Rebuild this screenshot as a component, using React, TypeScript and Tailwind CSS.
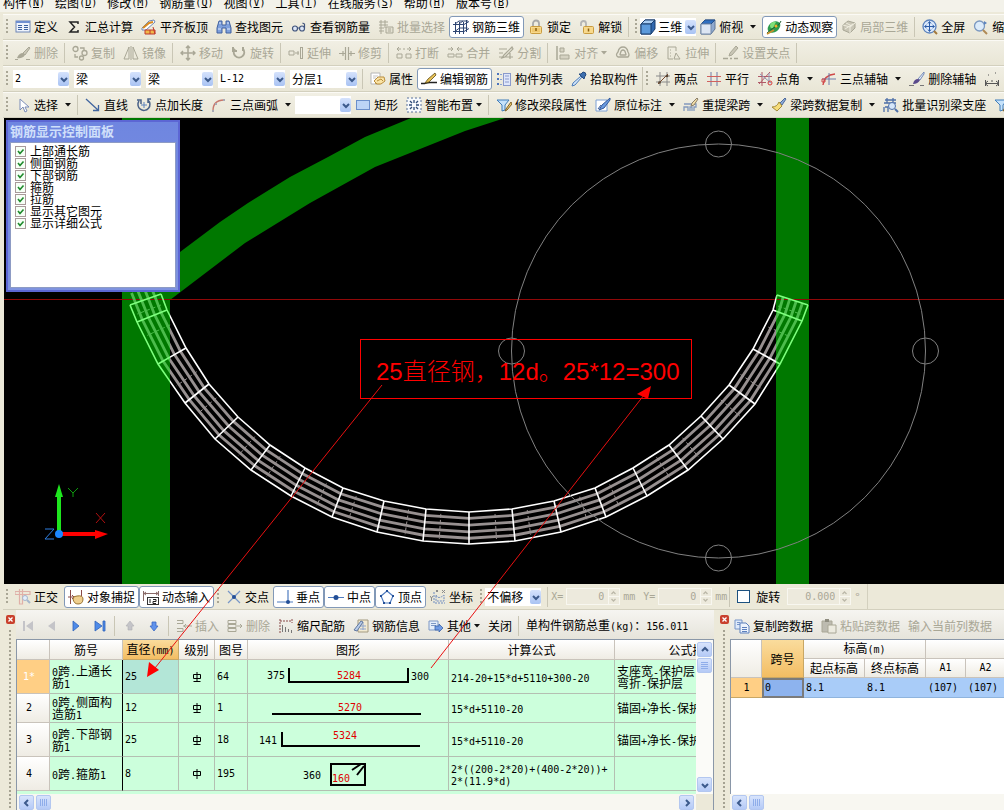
import React from "react";
import type { ReactNode } from "react";

/* ---------- text ---------- */

// Latin runs use a 6px-wide monospaced face next to 12px Chinese glyphs.
function Mix({ children }: { children: string }) {
  const parts = children.split(/([\x20-\x7e]+)/).filter(Boolean);
  return (
    <>
      {parts.map((p, i) =>
        /^[\x20-\x7e]+$/.test(p) ? (
          <span key={i} className="whitespace-pre font-['DejaVu_Sans_Mono',monospace] text-[10px]">
            {p}
          </span>
        ) : (
          <React.Fragment key={i}>{p}</React.Fragment>
        ),
      )}
    </>
  );
}

/* ---------- icons ---------- */

const G = "#a9a796";
const B = "#3a5f9e";

const icons: Record<string, ReactNode> = {
  define: (
    <>
      <rect x="1" y="2" width="14" height="11" fill="#eef3fc" stroke="#6f86b5" />
      <rect x="1" y="2" width="14" height="2" fill="#6f8fd0" />
      <path d="M3 6.500h4M3 8.500h4M3 10.500h4M9 6.500h4M9 8.500h4M9 10.500h4" stroke={B} />
    </>
  ),
  sigma: <path d="M12 5V3H4l4.500 5L4 13h8v-2" fill="none" stroke="#222" strokeWidth="1.500" />,
  align: (
    <>
      <path d="M1 9l7-7 5-1 1 2-9 8H1z" fill="#fff" stroke="#6d87b8" />
      <path d="M2 9l6-5 4-1" stroke="#d98a1e" strokeWidth="2" fill="none" />
      <path d="M4 11h10v4H4z" fill="#f0b848" stroke="#c0392b" />
      <path d="M9 11v4M12 8l2 7" stroke="#c0392b" />
    </>
  ),
  find: (
    <>
      <path d="M3 2h3v4h4V2h3l2 7v5h-5V9H6v5H1V9z" fill="#7ea0dc" stroke="#41619f" />
      <path d="M2 10h3M11 10h3M3 4h2M11 4h2" stroke="#dfe9fb" />
    </>
  ),
  view: (
    <>
      <circle cx="4" cy="9.500" r="2.500" fill="#dce6f6" stroke="#41547c" strokeWidth="1.200" />
      <circle cx="11" cy="9.500" r="2.500" fill="#dce6f6" stroke="#41547c" strokeWidth="1.200" />
      <path d="M6.500 9h2M13.500 9V5l-2-1" fill="none" stroke="#41547c" strokeWidth="1.200" />
    </>
  ),
  batch: (
    <>
      <path d="M1 3h9M1 6h9M1 9h5M1 12h5M3 1v14M7 1v8" stroke={G} fill="none" />
      <path d="M8 8h7v6H8zM10 10h3M10 12h3" stroke={G} fill="#e4e1d2" />
    </>
  ),
  rebar3d: (
    <path d="M0 5.500h11l5-3M0 12.500h11l5-3M2.500 3v12M6.500 3v12M10.500 3v12M13.500 1v12M2 5l4-3h9M6 5l4-3M2.500 12l4-3h8" stroke="#2f4673" fill="none" />
  ),
  lock: (
    <>
      <path d="M5 8V4.500a3 3 0 0 1 6 0V8" fill="none" stroke="#a8a8a8" strokeWidth="1.800" />
      <rect x="2.500" y="7.500" width="11" height="7" rx="1" fill="#f8d98c" stroke="#c99b3e" />
      <path d="M4 10h8M4 12h8" stroke="#e6b655" />
      <path d="M8 9v3" stroke="#8a5f10" strokeWidth="1.500" />
    </>
  ),
  unlock: (
    <>
      <path d="M2 7V4.500a2.500 2.500 0 0 1 5 0V8" fill="none" stroke="#b4b4b4" strokeWidth="1.800" />
      <rect x="4.500" y="7.500" width="10" height="7" rx="1" fill="#f8d98c" stroke="#c99b3e" />
      <path d="M9.500 9.500v3" stroke="#8a5f10" strokeWidth="1.500" />
    </>
  ),
  cube: (
    <>
      <path d="M1 5l4-4h10v9l-4 5H1z" fill="#2f68b0" stroke="#183c6c" />
      <path d="M1 5l4-4h10l-4 4z" fill="#a9cdf3" stroke="#183c6c" />
      <path d="M1 5h10v10H1z" fill="#5d9bdc" stroke="#183c6c" />
    </>
  ),
  cubeTop: (
    <>
      <path d="M1 5l4-4h10v9l-4 5H1z" fill="#8fa9cf" stroke="#5f7797" />
      <path d="M1 5l4-4h10l-4 4z" fill="#2f6fc0" stroke="#27518a" />
      <path d="M1 5h10v10H1z" fill="#dde6f3" stroke="#7289a8" />
    </>
  ),
  orbit: (
    <>
      <ellipse cx="8" cy="8" rx="7" ry="5" fill="#2e9b4d" transform="rotate(-38 8 8)" />
      <path d="M4 6q2-4 6-3l-3 6q-3 1-3-3z" fill="#7fe07a" />
      <path d="M1 14q3-3 8-6 5-2 6-6" fill="none" stroke="#1d5d2f" />
      <path d="M1 15l7-4" stroke="#c98d2a" strokeWidth="1.500" />
      <circle cx="10" cy="7" r="1.500" fill="#f0b028" />
    </>
  ),
  local3d: (
    <>
      <path d="M2 6l5-4 7 2v5l-5 5-7-3z" fill="#c9c6b6" stroke={G} />
      <path d="M2 6l7 2 5-4M9 8v6M5 4l6 3M4 10l8-5" stroke="#efeddf" fill="none" />
    </>
  ),
  full: (
    <>
      <circle cx="7.500" cy="7.500" r="6.500" fill="#dbe9fb" stroke="#5c83bd" strokeWidth="1.300" />
      <path d="M7.500 3v9M3 7.500h9M6 4.500l1.500-2L9 4.500M6 10.500l1.500 2 1.500-2M4.500 6l-2 1.500 2 1.500M10.500 6l2 1.500-2 1.500" stroke="#2b5ca8" fill="none" />
      <path d="M12 12l3 3" stroke="#a4793c" strokeWidth="2" />
    </>
  ),
  zoom: (
    <>
      <circle cx="6.500" cy="7" r="5" fill="#dcebfa" stroke="#7b98c0" strokeWidth="1.300" />
      <path d="M10 11l4 4" stroke="#b08a55" strokeWidth="2" />
      <path d="M11 2l3 2-3 2" fill="#5c83bd" />
    </>
  ),
  brushG: (
    <>
      <path d="M14 2l-6 6 2 2 5-7z" fill="#c9c6b6" stroke={G} />
      <path d="M8 8q-4 0-6 5 5 1 8-3z" fill={G} />
      <path d="M0 14.500h3M11 14.500h4" stroke={G} />
    </>
  ),
  copyG: (
    <g fill="none" stroke={G} strokeWidth="1.300">
      <circle cx="3.500" cy="4" r="2.500" />
      <circle cx="12.500" cy="8" r="2.500" />
      <circle cx="9.500" cy="13" r="2" />
      <path d="M8 3h4v2M3 9v3h3" />
    </g>
  ),
  mirrorG: <path d="M6 2v12H1zM10 2v12h5zM8 1v14" fill="none" stroke={G} />,
  moveG: <path d="M8 1v14M1 8h14M6 3l2-2 2 2M6 13l2 2 2-2M3 6L1 8l2 2M13 6l2 2-2 2" fill="none" stroke={G} strokeWidth="1.500" />,
  rotateG: <path d="M4 4a5.200 5.200 0 1 0 8 0M2 2v4h4M12 2v4" fill="none" stroke={G} strokeWidth="2" />,
  extendG: <path d="M1 6h5v4H1zM7 8h4M10 6v4M14.500 2v12M12.500 2v12M12 2.500h3M12 13.500h3" fill="none" stroke={G} />,
  trimG: <path d="M0 8.500h6M10 8.500h6M6.500 2v13M9.500 2v13M4 6v5M12 6v5" fill="none" stroke={G} strokeWidth="1.200" />,
  breakG: <path d="M1 4h4M7 4h2M11 4h4M3 2l-2 2 2 2M13 2l2 2-2 2M1 9h5v4H1zM10 9h5v4h-5z" fill="none" stroke={G} />,
  mergeG: <path d="M1 4h5M10 4h5M4 2l2 2-2 2M12 2l-2 2 2 2M1 9h6v3H1zM9 9h6v3H9z" fill="none" stroke={G} />,
  splitG: <path d="M1 4h8M1 12h14M14 2L6 10l-2 3 3-1 8-8zM1 8h4M12 8v6" fill="none" stroke={G} strokeWidth="1.200" />,
  alignG: (
    <>
      <path d="M2 1v14" stroke={G} strokeWidth="1.500" />
      <path d="M5 3h4v4H5zM5 10h9v4H5z" fill="#d5d2c2" stroke={G} />
    </>
  ),
  offsetG: (
    <g fill="none" stroke={G} strokeWidth="1.300">
      <path d="M8 2q4 0 5 5 2 3 0 5H3q-3-2 0-5 1-5 5-5z" />
      <path d="M8 5q2 0 2.500 3 1 2 0 2h-5q-1 0 0-2Q6 5 8 5z" />
    </g>
  ),
  stretchG: <path d="M2 2h8v4M2 2v12h5M10 8l4 6H8zM4 5h1M4 8h1M4 11h1" fill="none" stroke={G} />,
  gripG: (
    <>
      <path d="M13 1L7 8l-1 3 3-1 6-7z" fill="#c9c6b6" stroke={G} />
      <path d="M0 13.500h5M7 13.500h2M11 13.500h4" stroke={G} strokeWidth="1.500" />
    </>
  ),
  props: (
    <>
      <path d="M1 2h9v11H1z" fill="#fff" stroke="#b5b5b5" />
      <path d="M3 5h5M3 7h3" stroke="#c4c4c4" />
      <path d="M4 10l4-4h6l1 4-4 3H7z" fill="#fae3a4" stroke="#b98d3c" />
      <path d="M7 10l4-2 2 2M5 12l2 1" stroke="#b98d3c" fill="none" />
    </>
  ),
  editRebar: (
    <>
      <path d="M0 12.500h4q3-1 5-1h7" fill="none" stroke="#222" strokeWidth="1.300" />
      <path d="M14 2L7 8l-3 4 4-1 7-7z" fill="#e8c257" stroke="#5e4a12" strokeWidth=".8" />
    </>
  ),
  list: (
    <>
      <path d="M1 2h2v2H1zM1 7h2v2H1zM1 12h2v2H1z" fill="#4c74bd" />
      <path d="M4 3.500h2M4 8.500h2M4 13.500h2" stroke="#8aa3d2" />
      <rect x="7.500" y="2.500" width="7" height="12" fill="#dfe6fa" stroke="#8b9acb" />
      <path d="M9 5h4M9 8h4M9 11h4" stroke="#8b9acb" />
    </>
  ),
  pick: (
    <>
      <path d="M10 5l1 1-7 8-3 1 1-3z" fill="#cfe4fb" stroke="#4f7db8" />
      <path d="M8 3l5 5 1-3 1-1q0-3-3-3l-2 2z" fill="#3e6fae" stroke="#254b80" />
    </>
  ),
  twoPt: (
    <>
      <path d="M5 1v14M12 1v14M1 5h14M1 11h14" stroke="#8a8a8a" fill="none" />
      <path d="M3 13L13 3" stroke="#7a4a30" />
      <circle cx="4.500" cy="11.500" r="1.300" fill="#5b4632" />
      <circle cx="12" cy="5" r="1.300" fill="#5b4632" />
    </>
  ),
  parallel: (
    <>
      <path d="M5 1v14M11 1v14" stroke="#6f7ba8" />
      <path d="M1 5.500h14M1 10.500h14" stroke="#d0605e" />
    </>
  ),
  ptAngle: (
    <>
      <path d="M5 1v14M1 5.500h14M1 11.500h8M13 1L2 13" stroke="#b05a68" fill="none" />
      <path d="M12 2v10M3 3l11 9" stroke="#8f97b8" />
      <circle cx="13" cy="12" r="2" fill="none" stroke="#d43d3d" />
    </>
  ),
  threeAxis: (
    <>
      <path d="M2 14Q3 4 14 3" fill="none" stroke="#d04848" strokeWidth="1.400" />
      <path d="M8 2v12M1 8h14" stroke="#6f7ba8" />
      <path d="M1 8h3v3H1z" fill="none" stroke="#d04848" />
    </>
  ),
  delAxis: (
    <>
      <path d="M15 1L9 8l2 1 4-6z" fill="#e6edf8" stroke="#7389b6" />
      <path d="M9 8q-4 0-5 5 5 0 7-4z" fill="#5a4a8c" />
      <path d="M0 14.500h5M11 14.500h4" stroke="#777" />
    </>
  ),
  dim: <path d="M1.500 9v6M14.500 9v6M1 12.500h14M4 10l-3 2.500 3 2.500M12 10l3 2.500-3 2.500M4 4h1M11 2h1M8 9v2" fill="none" stroke="#555" />,
  cursor: <path d="M5 2v11l3-3 2 5 2-1-2-4h4z" fill="#fff" stroke="#7a8cb8" />,
  line: <path d="M1 2l12 11M8 13.500h5.500V8" fill="none" stroke="#41659f" strokeWidth="1.300" />,
  ptLen: (
    <>
      <path d="M3 4a6 6 0 1 0 9-1M1 3h4v4M12 6V2h3" fill="none" stroke="#4a6288" strokeWidth="1.500" />
      <path d="M8 5v6M5 8h6" stroke="#5c83bd" />
    </>
  ),
  arc: (
    <>
      <path d="M2 14Q2 3 13 3" fill="none" stroke="#c8776c" strokeWidth="1.400" />
      <path d="M12 2h2v2h-2zM1 13h2v2H1zM4 6h2v2H4z" fill="#a9a9b4" />
    </>
  ),
  rect: <rect x="1.500" y="3.500" width="13" height="9" fill="#bcd4f6" stroke="#6b8fca" />,
  smart: (
    <>
      <path d="M1 1h14v14H1z" fill="#f7fafd" stroke="#58719b" strokeDasharray="2 2" />
      <path d="M8 3v3M8 10v3M3 8h3M10 8h3M4 4l2 2M12 4l-2 2M4 12l2-2M12 12l-2-2" stroke="#2f4b78" strokeWidth="1.300" />
    </>
  ),
  beamProp: (
    <>
      <path d="M1 3h12l-4 5v5l-3 1V8z" fill="#c6e2fa" stroke="#3f7dbb" />
      <path d="M15 5l-5 7-1 2 2-1 5-6z" fill="#f0c968" stroke="#7d602a" />
    </>
  ),
  label: (
    <>
      <path d="M1 3h11v11H1z" fill="#fff" stroke="#7da0d4" />
      <path d="M15 1L7 8l-3 5 5-2 6-8z" fill="#6a9be0" stroke="#33589a" />
      <path d="M3 12l3-4" stroke="#33589a" />
    </>
  ),
  respan: (
    <>
      <path d="M1 7h12v3h-2v4M5 14v-4H1v4M9 14v-4H7v4" fill="none" stroke="#8299bd" strokeWidth="1.300" />
      <path d="M14 1L9 6l-1 3 3-1 4-6z" fill="#f3dfa8" stroke="#8b7f6a" />
    </>
  ),
  spanCopy: (
    <>
      <path d="M14 1l-5 5 2 2 4-6z" fill="#8ba9d8" stroke="#4e6b9d" />
      <path d="M8 5l3 4-5 5-5-4q5 0 7-5z" fill="#f6dd7a" stroke="#a58b3a" />
    </>
  ),
  recog: (
    <>
      <path d="M2 3h11M1 6h12M4 1v5M10 1v5M2 10h3v5M1 10v5" fill="none" stroke="#4e6fa8" strokeWidth="1.300" />
      <circle cx="9" cy="9" r="3.500" fill="#d5e6fa" stroke="#4e6fa8" />
      <path d="M12 12l3 3" stroke="#4e6fa8" strokeWidth="2" />
    </>
  ),
  ortho: (
    <>
      <path d="M0 2.500h15v3H0zM4.500 0v15h3V0" stroke="#e0b0a8" fill="none" strokeWidth="1.200" />
      <circle cx="10" cy="9" r="2.500" fill="#e4eefb" stroke="#a5b6cc" />
      <path d="M12 11l3 3" stroke="#a5b6cc" strokeWidth="2" />
    </>
  ),
  snap: (
    <>
      <path d="M2.500 1v14M13.500 1v9M0 8h6M4 6l2 2-2 2" stroke="#8a4a48" fill="none" />
      <path d="M5 10q0-3 4-3 6-1 6 3 0 5-5 5-4 0-5-5z" fill="#efcf8f" stroke="#9c7432" />
    </>
  ),
  dynIn: (
    <>
      <path d="M.5 2v10M15.500 2v5M0 4.500h16M3 3L1 4.500 3 6M13 3l2 1.500L13 6" stroke="#8a6a68" fill="none" />
      <rect x="4.500" y="8.500" width="11" height="7" fill="#fff" stroke="#333" />
      <path d="M7 10v4M10 10.500h3v2h-3v2h3" stroke="#222" fill="none" />
    </>
  ),
  cross: (
    <>
      <path d="M2 2l12 12M14 2L2 14" stroke="#7796c8" strokeWidth="1.200" />
      <circle cx="8" cy="8" r="2" fill="#234f97" />
    </>
  ),
  perp: (
    <>
      <path d="M11 1v12M0 13h16" stroke="#4f7cc0" strokeWidth="1.200" />
      <circle cx="11" cy="13" r="2" fill="#234f97" />
    </>
  ),
  mid: (
    <>
      <path d="M0 8.500h16" stroke="#4f7cc0" />
      <circle cx="8" cy="8.500" r="2.500" fill="#234f97" />
    </>
  ),
  vertex: (
    <>
      <path d="M8 2l6 5-3 7H5L2 7z" fill="none" stroke="#4f7cc0" strokeWidth="1.200" />
      <path d="M7 1h2v2H7zM13 6h2v2h-2zM1 6h2v2H1zM4 13h2v2H4zM10 13h2v2h-2z" fill="#234f97" />
    </>
  ),
  coord: (
    <>
      <path d="M4 3v11h11M6 6q2 5 8 0v6H6z" stroke="#6d8bc0" fill="none" strokeDasharray="2 1" />
      <path d="M12 1l3 3M15 1l-3 3M6 1l2 2M8 1L6 3M0 7l1.500 2v3M3 7L1.500 9" stroke="#8a8a8a" fill="none" />
    </>
  ),
  first: <path d="M3 3h2v10H3zM13 3v10L6 8z" fill="#c4c4c8" />,
  prev: <path d="M11 3v10L4 8z" fill="#c4c4c8" />,
  next: <path d="M5 3v10l6-5z" fill="#4f8be8" stroke="#2e63bb" strokeWidth=".8" />,
  last: <path d="M3 3v10l7-5zM11 3h2v10h-2z" fill="#4f8be8" stroke="#2e63bb" strokeWidth=".8" />,
  up: <path d="M8 3l4 5H10v4H6V8H4z" fill="#c4c4c8" stroke="#b0b0b4" strokeWidth=".6" />,
  down: <path d="M8 13l4-5H10V4H6v4H4z" fill="#5f92ec" stroke="#3a68c4" strokeWidth=".8" />,
  insert: <path d="M1 2.500h6v3H1M1 10.500h6v3H1M7 8h9M10 6L8 8l2 2" fill="none" stroke={G} />,
  remove: <path d="M1 2.500h8v3H1zM1 6.500h8v3H1zM1 10.500h8v3H1zM10 8h5M13 6l2 2-2 2" fill="none" stroke={G} />,
  scale: (
    <>
      <path d="M2 1v14M2 3h12M14 1v4" stroke="#8a4a48" fill="none" strokeDasharray="2 1" />
      <path d="M4.500 7v7M7.500 9v5M10.500 11v3M13.500 12v3" stroke="#777" />
    </>
  ),
  info: (
    <>
      <path d="M5 2h10v12H5z" fill="#f2ead2" stroke="#a39a80" />
      <path d="M7 8h6M7 11h6M10 4v8" stroke="#8fa5cd" />
      <path d="M1 12l7-9 2 1-6 9z" fill="#b9cdea" stroke="#60779f" />
    </>
  ),
  other: (
    <>
      <path d="M1 3h9v9H1z" fill="#e4edfa" stroke="#7d97c4" />
      <path d="M3 5.500h5M3 7.500h5" stroke="#7d97c4" />
      <path d="M7 8h4V6l4 4-4 4v-2H7z" fill="#6f9ae4" stroke="#3b62a8" strokeWidth=".8" />
    </>
  ),
  copySpan: (
    <>
      <path d="M1 2h7v9H1z" fill="#dfeafa" stroke="#7695c9" />
      <path d="M3 4.500h3M3 6.500h3" stroke="#7695c9" />
      <path d="M6 5h6l3 3v7H6z" fill="#eef4fd" stroke="#5d80bd" />
      <path d="M8 9.500h5M8 11.500h5M8 13.500h5" stroke="#5d80bd" />
    </>
  ),
  pasteG: (
    <>
      <path d="M1 3h10v11H1z" fill="#bdbbb0" stroke={G} />
      <path d="M4 1h4v3H4z" fill="#8f8d80" />
      <path d="M7 7h8v8H7z" fill="#eceadf" stroke={G} />
    </>
  ),
};

function Icon({ name }: { name: string }) {
  return (
    <svg viewBox="0 0 16 16" className="size-4 shrink-0" aria-hidden="true">
      {icons[name]}
    </svg>
  );
}

/* ---------- toolbar parts ---------- */

type ItemProps = { icon?: string; text?: string; on?: boolean; off?: boolean; arrow?: boolean; tight?: boolean };

function Item({ icon, text, on, off, arrow, tight }: ItemProps) {
  return (
    <button
      type="button"
      disabled={off}
      aria-label={text ?? icon}
      className={`flex h-[22px] shrink-0 items-center gap-[3px] rounded-[3px] border px-[3px] whitespace-nowrap ${
        on ? "border-[#8299b8] bg-white" : "border-transparent"
      } ${off ? "text-[#a9a796]" : "text-black"}`}
    >
      {icon && <Icon name={icon} />}
      {text && <span>{text}</span>}
      {arrow && (
        <svg viewBox="0 0 6 4" className={tight ? "h-1 w-[6px]" : "ml-1 h-1 w-[6px]"} aria-hidden="true">
          <path d="M0 0h6L3 3.500z" fill={off ? G : "#111"} />
        </svg>
      )}
    </button>
  );
}

function Sep() {
  return <span className="mr-[3px] ml-[2px] h-5 w-px shrink-0 bg-[#c9c6b5]" />;
}

function Grip() {
  return <span className="mx-[3px] h-4 w-[2px] shrink-0 bg-[repeating-linear-gradient(to_bottom,#aaa796_0_2px,transparent_2px_4px)]" />;
}

function Bar({ children }: { children: ReactNode }) {
  return (
    <div className="flex h-[26px] items-center overflow-hidden border-t border-b border-t-[#fbfaf5] border-b-[#d3d0be] bg-linear-to-b from-[#f1efe4] to-[#e9e6d6]">
      {children}
    </div>
  );
}

function Chevron({ dir = "down" }: { dir?: "down" | "up" | "left" | "right" }) {
  const d = {
    down: "M2 4l3 3 3-3",
    up: "M2 6l3-3 3 3",
    left: "M6 2L3 5l3 3",
    right: "M4 2l3 3-3 3",
  }[dir];
  return (
    <svg viewBox="0 0 10 10" className="size-[10px]" aria-hidden="true">
      <path d={d} fill="none" stroke="#3c5a8c" strokeWidth="2" />
    </svg>
  );
}

const comboWidth = { tiny: "w-10", narrow: "w-14", normal: "w-[67px]" };

function Combo({ value, label, size = "normal" }: { value: string; label: string; size?: keyof typeof comboWidth }) {
  const mono = /^[\x20-\x7e]*$/.test(value);
  return (
    <span className={`relative flex h-[18px] shrink-0 ${comboWidth[size]}`}>
      <select
        aria-label={label}
        className={`h-full w-full appearance-none bg-white pr-3 pl-[2px] leading-4 outline-none ${
          mono ? "font-['DejaVu_Sans_Mono',monospace] text-[10px]" : ""
        }`}
        defaultValue={value}
      >
        <option>{value}</option>
      </select>
      <span className="pointer-events-none absolute top-[2px] right-0 flex h-[14px] w-[11px] items-center justify-center rounded-[2px] bg-linear-to-b from-[#d5e2fc] to-[#a9c3f3]">
        <Chevron />
      </span>
    </span>
  );
}

function Num({ value, label, wide }: { value: string; label: string; wide?: boolean }) {
  return (
    <span className={`flex h-[17px] shrink-0 items-center border border-[#f8f7f0] bg-[#edeadd] ${wide ? "w-16" : "w-[54px]"}`}>
      <input
        disabled
        aria-label={label}
        defaultValue={value}
        className="w-full min-w-0 bg-transparent pr-1 text-right font-['DejaVu_Sans_Mono',monospace] text-[10px] text-[#a9a796]"
      />
      <svg viewBox="0 0 11 15" className="h-[15px] w-[11px] shrink-0" aria-hidden="true">
        <path d="M.5 0v15M1 7.500h10" stroke="#f8f7f0" />
        <path d="M3.500 5l2-2 2 2M3.500 10l2 2 2-2" fill="none" stroke="#bbb8a8" strokeWidth="1.300" />
      </svg>
    </span>
  );
}

/* ---------- menu ---------- */

const menus: [string, string][] = [
  ["构件", "N"],
  ["绘图", "D"],
  ["修改", "M"],
  ["钢筋量", "Q"],
  ["视图", "V"],
  ["工具", "T"],
  ["在线服务", "S"],
  ["帮助", "H"],
  ["版本号", "B"],
];

function MenuBar() {
  return (
    <nav className="flex h-3 items-end gap-[10px] overflow-hidden bg-[#f3f2ea] pb-[2px] pl-[3px] leading-[14px]">
      {menus.map(([t, k]) => (
        <a key={t} href="#" className="flex shrink-0 whitespace-nowrap">
          {t}
          <span className="font-['DejaVu_Sans_Mono',monospace] text-[10px]">
            (<u>{k}</u>)
          </span>
        </a>
      ))}
    </nav>
  );
}

function Toolbars() {
  return (
    <>
      <Bar>
        <Grip />
        <Item icon="define" text="定义" />
        <Item icon="sigma" text="汇总计算" />
        <Item icon="align" text="平齐板顶" />
        <Item icon="find" text="查找图元" />
        <Item icon="view" text="查看钢筋量" />
        <Item icon="batch" text="批量选择" off />
        <Item icon="rebar3d" text="钢筋三维" on />
        <Item icon="lock" text="锁定" />
        <Item icon="unlock" text="解锁" />
        <Sep />
        <Grip />
        <span className="flex items-center bg-white">
          <Icon name="cube" />
          <Combo value="三维" label="视图模式" size="tiny" />
        </span>
        <Item icon="cubeTop" text="俯视" arrow />
        <span className="w-[2px] shrink-0" />
        <Item icon="orbit" text="动态观察" on />
        <Item icon="local3d" text="局部三维" off />
        <Sep />
        <Item icon="full" text="全屏" />
        <Item icon="zoom" text="缩放" />
      </Bar>
      <Bar>
        <Grip />
        <Item icon="brushG" text="删除" off />
        <Sep />
        <Item icon="copyG" text="复制" off />
        <Item icon="mirrorG" text="镜像" off />
        <Sep />
        <Item icon="moveG" text="移动" off />
        <Item icon="rotateG" text="旋转" off />
        <Sep />
        <Item icon="extendG" text="延伸" off />
        <Item icon="trimG" text="修剪" off />
        <Sep />
        <Item icon="breakG" text="打断" off />
        <Item icon="mergeG" text="合并" off />
        <Item icon="splitG" text="分割" off />
        <Sep />
        <Item icon="alignG" text="对齐" arrow tight off />
        <Item icon="offsetG" text="偏移" off />
        <Item icon="stretchG" text="拉伸" off />
        <Sep />
        <Item icon="gripG" text="设置夹点" off />
        <Sep />
      </Bar>
      <Bar>
        <Grip />
        <div className="flex gap-[5px] pl-[2px]">
          <Combo value="2" label="楼层" size="narrow" />
          <Combo value="梁" label="构件类型" />
          <Combo value="梁" label="构件" />
          <Combo value="L-12" label="名称" />
          <Combo value="分层1" label="分层" />
        </div>
        <span className="w-[3px] shrink-0" />
        <Sep />
        <Item icon="props" text="属性" />
        <Item icon="editRebar" text="编辑钢筋" on />
        <Item icon="list" text="构件列表" />
        <Item icon="pick" text="拾取构件" />
        <span className="h-full w-px shrink-0 bg-[#c9c6b5]" />
        <Grip />
        <Item icon="twoPt" text="两点" />
        <Item icon="parallel" text="平行" />
        <Item icon="ptAngle" text="点角" arrow />
        <Item icon="threeAxis" text="三点辅轴" arrow />
        <Item icon="delAxis" text="删除辅轴" />
        <Item icon="dim" />
      </Bar>
      <Bar>
        <Grip />
        <Item icon="cursor" text="选择" arrow />
        <Sep />
        <Item icon="line" text="直线" />
        <Item icon="ptLen" text="点加长度" />
        <Item icon="arc" text="三点画弧" arrow />
        <Combo value="" label="画弧方式" size="narrow" />
        <Item icon="rect" text="矩形" />
        <Item icon="smart" text="智能布置" arrow tight />
        <Sep />
        <Item icon="beamProp" text="修改梁段属性" />
        <Item icon="label" text="原位标注" arrow />
        <Item icon="respan" text="重提梁跨" arrow />
        <Item icon="spanCopy" text="梁跨数据复制" arrow />
        <Item icon="recog" text="批量识别梁支座" />
        <Item icon="beamProp" />
      </Bar>
    </>
  );
}

/* ---------- drawing canvas ---------- */

type Pt = [number, number];

// Inner and outer edge joints of the curved beam, one pair per station.
const stations: [Pt, Pt][] = [
  [[161, 294], [130, 305]],
  [[167, 310], [137, 322]],
  [[186, 348], [158, 364]],
  [[209, 384], [185, 403]],
  [[238, 417], [215, 439]],
  [[270, 445], [251, 470]],
  [[305, 468], [291, 496]],
  [[343, 488], [332, 517]],
  [[384, 501], [377, 532]],
  [[426, 509], [423, 541]],
  [[469, 512], [469, 544]],
  [[512, 509], [515, 541]],
  [[554, 501], [561, 532]],
  [[595, 488], [606, 517]],
  [[633, 468], [647, 496]],
  [[669, 445], [688, 470]],
  [[701, 416], [723, 439]],
  [[729, 385], [755, 404]],
  [[753, 349], [780, 364]],
  [[773, 310], [802, 321]],
  [[777, 295], [808, 305]],
];

const at = ([a, b]: [Pt, Pt], t: number): Pt => [a[0] + (b[0] - a[0]) * t, a[1] + (b[1] - a[1]) * t];
const poly = (pts: Pt[]) => pts.map((p) => p.join(",")).join(" ");

// The bars run a little past the beam's left end.
const barStations: [Pt, Pt][] = [[[157, 284], [126, 295]], ...stations];

function Beam({ edge, bar, clip }: { edge: string; bar: string; clip: string }) {
  return (
    <g clipPath={`url(#${clip})`} fill="none">
      {[0.2, 0.41, 0.62, 0.82].map((t) => (
        <polyline key={t} points={poly(barStations.map((s) => at(s, t)))} stroke={bar} strokeWidth="2.800" />
      ))}
      {stations.slice(1).map((s, i) => {
        const prev = stations[i];
        const f = i % 2 ? 0.35 : 0.6;
        const rib: [Pt, Pt] = [at([prev[0], s[0]], f), at([prev[1], s[1]], f)];
        return <polyline key={i} points={poly([at(rib, 0.12), at(rib, 0.9)])} stroke={bar} strokeWidth="1" strokeDasharray="4 2" />;
      })}
      <polyline points={poly(stations.map((s) => s[0]))} stroke={edge} strokeWidth="1.600" />
      <polyline points={poly(stations.map((s) => s[1]))} stroke={edge} strokeWidth="1.600" />
      {stations.map((s, i) => (
        <polyline key={i} points={poly(s)} stroke={edge} strokeWidth="1.600" />
      ))}
    </g>
  );
}

function Drawing() {
  return (
    <svg viewBox="4 118 1000 466" className="block h-[466px] w-full" preserveAspectRatio="xMinYMin slice" aria-label="梁钢筋三维图">
      <defs>
        <clipPath id="solid">
          <path d="M170 118h606v466H170z" />
        </clipPath>
        <clipPath id="columns">
          <path d="M122 118h48v466h-48zM776 118h33v466h-33z" />
        </clipPath>
      </defs>
      <path d="M0 118h1010v466H0z" fill="#000" />
      <path d="M170 260L180 252 220 222 248 203 290 177 328 157 365 137 411 118H505L465 131 420 149 375 167 310 203 245 243 170 300z" fill="#007800" />
      <path d="M122 118h48v466h-48zM776 118h33v466h-33z" fill="#007800" />
      <path d="M4 299.500h1000" stroke="#900808" />
      <Beam edge="#ffffff" bar="#979090" clip="solid" />
      <Beam edge="#7dff7d" bar="#4cbc4c" clip="columns" />
      <g fill="none" stroke="#808080">
        <circle cx="718.5" cy="351" r="207" />
        <circle cx="718.5" cy="144" r="13" />
        <circle cx="718.5" cy="558" r="13" />
        <circle cx="511.5" cy="351" r="13" />
        <circle cx="925.5" cy="351" r="13" />
      </g>
      <path d="M59 534V497" stroke="#1ee61e" strokeWidth="4" />
      <path d="M59 484l4 13h-8z" fill="#1ee61e" />
      <path d="M59 534h38" stroke="#f00" strokeWidth="4" />
      <path d="M108 534l-13-4v9z" fill="#f00" />
      <circle cx="59" cy="534" r="4" fill="#1c86ff" />
      <g fill="none">
        <path d="M68 488l5 5 5-5M73 493v4" stroke="#0d9a0d" />
        <path d="M96 513l9 10M105 513l-9 10" stroke="#b01010" />
        <path d="M45 529h9l-9 10h9" stroke="#2f7fe0" />
      </g>
    </svg>
  );
}

const layers = ["上部通长筋", "侧面钢筋", "下部钢筋", "箍筋", "拉筋", "显示其它图元", "显示详细公式"];

function LayerPanel() {
  return (
    <section className="absolute top-[2px] left-[2px] flex h-[172px] w-[174px] flex-col border-2 border-[#5c66d4] bg-linear-to-b from-[#6f86e0] to-[#7f93df] px-[2px] pb-[2px]">
      <h2 className="h-5 text-[13px] leading-[18px] font-bold text-[#cfdffa]">钢筋显示控制面板</h2>
      <div className="flex-1 border border-[#8d9bc4] bg-white pt-[2px] pl-1">
        {layers.map((l) => (
          <label key={l} className="flex h-3 items-center gap-1 leading-3">
            <span className="grid size-[11px]">
              <input
                type="checkbox"
                defaultChecked
                className="peer col-start-1 row-start-1 size-[11px] appearance-none border border-[#a89a9a] bg-[#f6fff6]"
              />
              <svg viewBox="0 0 11 11" className="pointer-events-none invisible col-start-1 row-start-1 size-[11px] peer-checked:visible" aria-hidden="true">
                <path d="M3 5l2 2.500L8.500 3.500" fill="none" stroke="#1f8a2c" strokeWidth="1.600" />
              </svg>
            </span>
            {l}
          </label>
        ))}
      </div>
    </section>
  );
}

function Canvas() {
  return (
    <main className="relative ml-1 overflow-hidden bg-black">
      <Drawing />
      <LayerPanel />
      <p className="absolute top-[221px] left-[356px] h-[60px] w-[332px] border border-[#ff0000] pl-[15px] pt-px font-['Liberation_Sans','Noto_Sans_CJK_SC',sans-serif] text-[24px] leading-[62px] font-light whitespace-nowrap text-[#ff0000]">
        25直径钢，12d。25*12=300
      </p>
    </main>
  );
}

function SnapBar() {
  return (
    <div className="ml-[3px] flex h-[26px] items-center overflow-hidden border-b border-[#d3d0be] bg-[#ece9d9]">
      <Grip />
      <Item icon="ortho" text="正交" />
      <span className="w-[2px] shrink-0" />
      <Item icon="snap" text="对象捕捉" on />
      <Item icon="dynIn" text="动态输入" on />
      <Grip />
      <Item icon="cross" text="交点" />
      <Item icon="perp" text="垂点" on />
      <Item icon="mid" text="中点" on />
      <Item icon="vertex" text="顶点" on />
      <Item icon="coord" text="坐标" />
      <Grip />
      <Combo value="不偏移" label="偏移方式" size="narrow" />
      <span className="w-1 shrink-0" />
      <Sep />
      <div className="flex shrink-0 items-center gap-[3px] text-[#a9a796]">
        <Mix>X=</Mix>
        <Num value="0" label="X 偏移" />
        <Mix>mm</Mix>
        <span className="w-[2px]" />
        <Mix>Y=</Mix>
        <Num value="0" label="Y 偏移" />
        <Mix>mm</Mix>
      </div>
      <Sep />
      <label className="flex shrink-0 items-center gap-[6px] pl-1">
        <input type="checkbox" className="size-[13px] appearance-none border border-[#1c5180] bg-white" />
        旋转
      </label>
      <span className="w-[7px] shrink-0" />
      <Num value="0.000" label="旋转角度" wide />
      <span className="w-4 shrink-0 pl-1 text-[#a9a796]">°</span>
      <span className="h-full w-px bg-[#d3d0be]" />
    </div>
  );
}

/* ---------- bottom panes ---------- */

const headCell = "border-r border-b border-[#c9c3bb] bg-linear-to-b from-white to-[#efece4] p-0 text-center font-normal whitespace-nowrap";
const bodyCell = "border-r border-b border-[#b4bfb2] bg-[#ccffdc] p-0 pl-[2px] text-left leading-3";

const num = "font-['DejaVu_Sans_Mono',monospace] text-[10px]";

type Row = { no: string; name: string[]; dia: string; grade: string; fig: string; shape: ReactNode; formula: string[]; desc: string[]; h: string };

const rows: Row[] = [
  {
    no: "1*",
    name: ["0跨.上通长", "筋1"],
    dia: "25",
    grade: "Φ",
    fig: "64",
    h: "h-[34px]",
    shape: (
      <>
        <path d="M41 8v14h119V8" fill="none" stroke="#000" strokeWidth="2" />
        <text x="19" y="19">375</text>
        <text x="89" y="19" fill="#e00000">5284</text>
        <text x="163" y="20">300</text>
      </>
    ),
    formula: ["214-20+15*d+5110+300-20"],
    desc: ["支座宽-保护层", "弯折-保护层"],
  },
  {
    no: "2",
    name: ["0跨.侧面构", "造筋1"],
    dia: "12",
    grade: "Φ",
    fig: "1",
    h: "h-[29px]",
    shape: (
      <>
        <path d="M24 20h149" stroke="#000" strokeWidth="2" />
        <text x="90" y="17" fill="#e00000">5270</text>
      </>
    ),
    formula: ["15*d+5110-20"],
    desc: ["锚固+净长-保护层"],
  },
  {
    no: "3",
    name: ["0跨.下部钢", "筋1"],
    dia: "25",
    grade: "Φ",
    fig: "18",
    h: "h-[34px]",
    shape: (
      <>
        <path d="M34 9v14h138" fill="none" stroke="#000" strokeWidth="2" />
        <text x="11" y="21">141</text>
        <text x="85" y="16" fill="#e00000">5324</text>
      </>
    ),
    formula: ["15*d+5110-20"],
    desc: ["锚固+净长-保护层"],
  },
  {
    no: "4",
    name: ["0跨.箍筋1"],
    dia: "8",
    grade: "Φ",
    fig: "195",
    h: "h-[34px]",
    shape: (
      <>
        <rect x="83" y="7" width="34" height="21" fill="none" stroke="#000" strokeWidth="2" />
        <path d="M104 13l9-6M109 18l7-9" stroke="#000" strokeWidth="2" />
        <text x="55" y="22">360</text>
        <text x="84" y="25" fill="#e00000">160</text>
      </>
    ),
    formula: ["2*((200-2*20)+(400-2*20))+", "2*(11.9*d)"],
    desc: [],
  },
];

function Lines({ items }: { items: string[] }) {
  return (
    <>
      {items.map((t) => (
        <div key={t} className="h-3 whitespace-nowrap">
          <Mix>{t}</Mix>
        </div>
      ))}
    </>
  );
}

function RebarTable() {
  return (
    <table className="w-[754px] table-fixed border-separate border-spacing-0">
      <colgroup>
        <col className="w-[33px]" />
        <col className="w-[73px]" />
        <col className="w-14" />
        <col className="w-9" />
        <col className="w-[33px]" />
        <col className="w-[201px]" />
        <col className="w-[166px]" />
        <col className="w-[156px]" />
      </colgroup>
      <thead>
        <tr className="h-5 leading-4">
          <th className={headCell} />
          <th className={headCell}>筋号</th>
          <th className="border-r border-b border-[#c9a764] bg-linear-to-b from-[#fadc9c] to-[#f3bd62] p-0 text-center font-normal whitespace-nowrap">
            <Mix>直径(mm)</Mix>
          </th>
          <th className={headCell}>级别</th>
          <th className={headCell}>图号</th>
          <th className={headCell}>图形</th>
          <th className={headCell}>计算公式</th>
          <th className={headCell}>公式描述</th>
        </tr>
      </thead>
      <tbody>
        {rows.map((r, i) => (
          <tr key={r.no} className={r.h}>
            <th
              className={`border-r border-b border-[#c9c3bb] p-0 pr-2 text-center font-normal ${num} ${
                i === 0 ? "bg-[#ffcf85] text-white" : "bg-linear-to-b from-white to-[#efece4]"
              }`}
            >
              {r.no}
            </th>
            <td className="border-r border-b border-r-black border-b-[#b4bfb2] bg-[#ccffdc] p-0 pl-[2px] leading-3">
              <Lines items={r.name} />
            </td>
            <td className={`border-r border-b border-[#b4bfb2] p-0 pl-[2px] ${num} ${i === 0 ? "bg-[#b3e6d7]" : "bg-[#ccffdc]"}`}>{r.dia}</td>
            <td className={`${bodyCell} pr-[2px]`}>
              <svg viewBox="0 0 10 12" className="mx-auto h-3 w-[10px]" role="img" aria-label={r.grade}>
                <path d={i === 3 ? "M5 1v10M1.500 3.500h7v4h-7z" : "M5 1v10M1.500 3.500h7v4h-7zM1.500 10.500h7"} fill="none" stroke="#000" />
              </svg>
            </td>
            <td className={`${bodyCell} ${num}`}>{r.fig}</td>
            <td className="border-r border-b border-[#b4bfb2] bg-[#ccffdc] p-0 align-top">
              <svg viewBox="0 0 200 33" className={`block h-7 w-[200px] overflow-visible ${num}`} preserveAspectRatio="xMinYMin slice">
                {r.shape}
              </svg>
            </td>
            <td className={bodyCell}>
              <Lines items={r.formula} />
            </td>
            <td className={bodyCell}>
              <Lines items={r.desc} />
            </td>
          </tr>
        ))}
      </tbody>
    </table>
  );
}

const scrollBtn = "flex size-[15px] shrink-0 items-center justify-center rounded-[2px] border border-[#b3c7f0] bg-linear-to-b from-[#d8e4fc] to-[#b5caf6]";

function HScroll({ end }: { end?: boolean }) {
  return (
    <div className="flex h-[17px] items-center gap-[2px] bg-[#f8f7f1] px-[2px]">
      <button type="button" aria-label="向左滚动" className={scrollBtn}>
        <Chevron dir="left" />
      </button>
      <span className={scrollBtn}>
        <svg viewBox="0 0 9 9" className="size-[9px]" aria-hidden="true">
          <path d="M1.500 1v7M3.500 1v7M5.500 1v7M7.500 1v7" stroke="#8fadea" />
        </svg>
      </span>
      {end && (
        <button type="button" aria-label="向右滚动" className={`${scrollBtn} ml-auto`}>
          <Chevron dir="right" />
        </button>
      )}
    </div>
  );
}

function DockEdge({ label }: { label: string }) {
  return (
    <div className="flex w-4 shrink-0 flex-col items-center gap-[6px] bg-[#ece9d9] pt-[5px] pl-1">
      <button type="button" aria-label={label} className="size-[9px] shrink-0 rounded-[2px] bg-[#c9402c]">
        <svg viewBox="0 0 9 9" aria-hidden="true">
          <path d="M2.500 2.500l4 4M6.500 2.500l-4 4" stroke="#fff" strokeWidth="1.300" />
        </svg>
      </button>
      <span className="w-[2px] flex-1 bg-[repeating-linear-gradient(to_bottom,#a5a292_0_2px,transparent_2px_4px)]" />
    </div>
  );
}

function LeftPane() {
  return (
    <section className="flex min-w-0">
      <DockEdge label="关闭钢筋面板" />
      <div className="flex min-w-0 flex-1 flex-col">
        <div className="flex h-[29px] items-center overflow-hidden bg-linear-to-b from-[#f6f5f1] to-[#e6e4db] pt-[3px]">
          <Item icon="first" off />
          <Item icon="prev" off />
          <Item icon="next" />
          <Item icon="last" />
          <Sep />
          <Item icon="up" off />
          <Item icon="down" />
          <Sep />
          <Item icon="insert" text="插入" off />
          <Item icon="remove" text="删除" off />
          <Item icon="scale" text="缩尺配筋" />
          <Item icon="info" text="钢筋信息" />
          <Item icon="other" text="其他" arrow tight />
          <Item text="关闭" />
          <Sep />
          <span className="shrink-0 pl-1">
            <Mix>单构件钢筋总重(kg)</Mix>：<Mix>156.011</Mix>
          </span>
        </div>
        <div className="flex h-[155px] border-t border-l border-[#8a97a8] bg-white">
          <div className="min-w-0 flex-1 overflow-hidden bg-[#ccffdc]">
            <RebarTable />
          </div>
          <div className="flex w-[18px] shrink-0 flex-col items-center gap-px border-r border-[#8a97a8] bg-[#fbfbf8] py-[2px]">
            <button type="button" aria-label="向上滚动" className={scrollBtn}>
              <Chevron dir="up" />
            </button>
            <span className={scrollBtn}>
              <svg viewBox="0 0 9 9" className="size-[9px]" aria-hidden="true">
                <path d="M1 1.500h7M1 3.500h7M1 5.500h7M1 7.500h7" stroke="#8fadea" />
              </svg>
            </span>
            <button type="button" aria-label="向下滚动" className={`${scrollBtn} mt-auto`}>
              <Chevron />
            </button>
          </div>
        </div>
        <div className="flex border-l border-[#8a97a8]">
          <div className="min-w-0 flex-1">
            <HScroll end />
          </div>
          <span className="w-[18px] shrink-0 border-r border-[#8a97a8] bg-[#ece9d9]" />
        </div>
      </div>
    </section>
  );
}

const spanCell = `border-b border-[#8fb4dd] bg-[#a9ccf8] p-0 pl-[2px] text-left ${num}`;

function RightPane() {
  return (
    <section className="flex min-w-0">
      <DockEdge label="关闭跨数据面板" />
      <div className="flex min-w-0 flex-1 flex-col">
        <div className="flex h-[29px] items-center overflow-hidden bg-linear-to-b from-[#f6f5f1] to-[#e6e4db] pt-[3px]">
          <Item icon="copySpan" text="复制跨数据" />
          <Item icon="pasteG" text="粘贴跨数据" off />
          <Item text="输入当前列数据" off />
        </div>
        <div className="h-[155px] overflow-hidden border-t border-l border-[#8a97a8] bg-white">
          <table className="w-[275px] table-fixed border-separate border-spacing-0">
            <colgroup>
              <col className="w-[31px]" />
              <col className="w-[42px]" />
              <col className="w-[61px]" />
              <col className="w-[61px]" />
              <col className="w-[40px]" />
              <col className="w-[40px]" />
            </colgroup>
            <thead>
              <tr className="h-[19px] leading-4">
                <th rowSpan={2} className={headCell} />
                <th rowSpan={2} className="border-r border-b border-[#c9a764] bg-linear-to-b from-[#fadc9c] to-[#f3bd62] p-0 text-center font-normal">
                  跨号
                </th>
                <th colSpan={2} className={headCell}>
                  <Mix>标高(m)</Mix>
                </th>
                <th colSpan={2} className={headCell} />
              </tr>
              <tr className="h-[19px] leading-4">
                <th className={headCell}>起点标高</th>
                <th className={headCell}>终点标高</th>
                <th className={`${headCell} ${num}`}>A1</th>
                <th className={`${headCell} ${num}`}>A2</th>
              </tr>
            </thead>
            <tbody>
              <tr className="h-5">
                <th className={`border-b border-[#c9a764] bg-[#ffcf85] p-0 text-center font-normal ${num}`}>1</th>
                <td className={`border-2 border-[#7b7b7b] bg-[#8db3ee] p-0 pl-px ${num}`}>0</td>
                <td className={spanCell}>8.1</td>
                <td className={spanCell}>8.1</td>
                <td className={`${spanCell} text-center`}>(107)</td>
                <td className={`${spanCell} text-center`}>(107)</td>
              </tr>
            </tbody>
          </table>
        </div>
        <HScroll />
      </div>
    </section>
  );
}

/* Red leader arrows from the note down to the diameter cell and up from the bend length. */
function Leaders() {
  return (
    <svg viewBox="0 0 1004 810" className="pointer-events-none absolute top-0 left-0 h-[810px] w-[1004px]" aria-hidden="true">
      <path d="M382 385L155 668M431 668L644 395" stroke="#e81010" fill="none" />
      <path d="M147 677l2-15 10 8zM651 386l-3 13-11-5z" fill="#ff0000" />
    </svg>
  );
}

export default function App() {
  return (
    <div className="relative min-h-screen overflow-hidden bg-[#ece9d9] font-['Noto_Sans_CJK_SC',sans-serif] text-[12px] leading-4 text-black">
      <MenuBar />
      <div className="ml-[3px] pt-[2px]">
        <Toolbars />
      </div>
      <Canvas />
      <SnapBar />
      <div className="grid grid-cols-[714fr_290fr]">
        <LeftPane />
        <RightPane />
      </div>
      <Leaders />
    </div>
  );
}
